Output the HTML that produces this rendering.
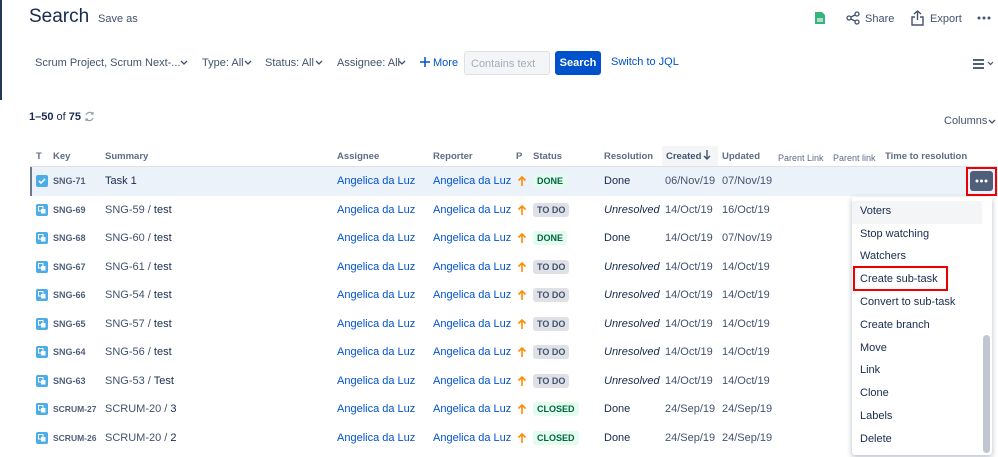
<!DOCTYPE html>
<html><head><meta charset="utf-8">
<style>
*{margin:0;padding:0;box-sizing:border-box}
body{width:998px;height:457px;overflow:hidden;background:#fff;font-family:"Liberation Sans",sans-serif;color:#172b4d;position:relative}
.a{position:absolute;white-space:nowrap}
.h{font-size:9.5px;color:#5e6c84;font-weight:bold;top:151px}
.row{position:absolute;left:30px;width:968px;height:29px}
.c{position:absolute;top:8px;font-size:11px;white-space:nowrap}
.key{font-size:9px;font-weight:bold;color:#505f79;top:9px}
.lk{color:#0052cc}
.gr{color:#42526e}
.ic{position:absolute;top:8px;left:6px}
.ar{position:absolute;top:8px;left:487px}
.st{font-size:9px;font-weight:bold;padding:2px 4px;border-radius:3px;top:7px}
.todo{background:#dfe1e6;color:#42526e}
.done{background:#e3fcef;color:#006644}
.menu{position:absolute;left:852px;top:197px;width:140px;height:258px;background:#fff;box-shadow:0 2px 6px rgba(9,30,66,.3);border-radius:3px}
.mi{position:absolute;left:8px;font-size:11px;color:#172b4d}
.f{font-size:11px;color:#42526e;top:57px}
</style></head><body>
<svg width="0" height="0" style="position:absolute"><defs>
<symbol id="sub" viewBox="0 0 12 12"><rect width="12" height="12" rx="2" fill="#4bade8"/><rect x="2.5" y="2.5" width="4.5" height="4.5" fill="none" stroke="#fff" stroke-width="1"/><rect x="5" y="5" width="4.5" height="4.5" fill="#fff"/></symbol>
<symbol id="arr" viewBox="0 0 10 12"><path d="M5 11V2M1.5 5.5L5 2l3.5 3.5" fill="none" stroke="#ff8b00" stroke-width="1.6"/></symbol>
</defs></svg>
<div class="a" style="left:0;top:0;width:2px;height:100px;background:#253858"></div>
<div class="a" style="left:29px;top:6px;font-size:19px;color:#172b4d">Search</div>
<div class="a" style="left:98px;top:13px;font-size:11px;color:#42526e">Save as</div>
<svg class="a" style="left:815px;top:12px" width="10" height="12" viewBox="0 0 10 12"><path d="M0 0h7l3 3v9H0z" fill="#36b37e"/><rect x="2" y="6" width="6" height="4" fill="#fff" opacity=".6"/></svg>
<svg class="a" style="left:846px;top:11px" width="14" height="14" viewBox="0 0 14 14" fill="none" stroke="#42526e" stroke-width="1.3"><circle cx="3" cy="7" r="2"/><circle cx="11" cy="3" r="2"/><circle cx="11" cy="11" r="2"/><path d="M5 6l4-2M5 8l4 2"/></svg>
<div class="a" style="left:865px;top:13px;font-size:11px;color:#42526e">Share</div>
<svg class="a" style="left:911px;top:10px" width="13" height="16" viewBox="0 0 13 16" fill="none" stroke="#42526e" stroke-width="1.4"><path d="M6.5 1v9M3 4l3.5-3L10 4M4 7H1v8h11V7H9"/></svg>
<div class="a" style="left:930px;top:13px;font-size:11px;color:#42526e">Export</div>
<svg class="a" style="left:977px;top:16px" width="14" height="4"><circle cx="2" cy="2" r="1.5" fill="#42526e"/><circle cx="7" cy="2" r="1.5" fill="#42526e"/><circle cx="12" cy="2" r="1.5" fill="#42526e"/></svg>

<svg width="0" height="0" style="position:absolute"><defs><symbol id="chev" viewBox="0 0 8 5"><path d="M1 1l3 3 3-3" fill="none" stroke="#42526e" stroke-width="1.3"/></symbol></defs></svg>
<div class="a f" style="left:35px">Scrum Project, Scrum Next-...</div><svg class="a" style="left:180px;top:60px" width="8" height="5"><use href="#chev"/></svg>
<div class="a f" style="left:202px">Type: All</div><svg class="a" style="left:244px;top:60px" width="8" height="5"><use href="#chev"/></svg>
<div class="a f" style="left:265px">Status: All</div><svg class="a" style="left:315px;top:60px" width="8" height="5"><use href="#chev"/></svg>
<div class="a f" style="left:337px">Assignee: All</div><svg class="a" style="left:398px;top:60px" width="8" height="5"><use href="#chev"/></svg>
<svg class="a" style="left:420px;top:57px" width="10" height="10"><path d="M5 0v10M0 5h10" stroke="#0052cc" stroke-width="1.5"/></svg>
<div class="a f" style="left:433px;color:#0052cc">More</div>
<div class="a" style="left:464px;top:51px;width:86px;height:24px;background:#f4f5f7;border:1px solid #dfe1e6;border-radius:3px;font-size:11px;color:#a5adba;padding:6px 6px">Contains text</div>
<div class="a" style="left:555px;top:51px;width:46px;height:24px;background:#0052cc;border-radius:3px;color:#fff;font-weight:bold;font-size:11px;padding:6px 0;text-align:center">Search</div>
<div class="a" style="left:611px;top:56px;font-size:11px;color:#0052cc">Switch to JQL</div>
<svg class="a" style="left:973px;top:59px" width="22" height="10" viewBox="0 0 22 10"><path d="M0 1h11M0 5h11M0 9h11" stroke="#172b4d" stroke-width="1.6"/><path d="M15 3l2.5 2.5L20 3" stroke="#42526e" fill="none" stroke-width="1.2"/></svg>

<div class="a" style="left:29px;top:111px;font-size:11px;font-weight:bold;color:#172b4d">1–50 <span style="font-weight:normal">of</span> 75</div>
<svg class="a" style="left:84px;top:111px" width="11" height="11" viewBox="0 0 11 11" fill="none" stroke="#97a0af" stroke-width="1.2"><path d="M2 4a4 4 0 0 1 7-1M9 7a4 4 0 0 1-7 1M9 1v2H7M2 10V8h2"/></svg>
<div class="a" style="left:944px;top:115px;font-size:11px;color:#42526e">Columns</div><svg class="a" style="left:988px;top:119px" width="8" height="5"><use href="#chev"/></svg>

<div class="a h" style="left:36px">T</div>
<div class="a h" style="left:53px">Key</div>
<div class="a h" style="left:105px">Summary</div>
<div class="a h" style="left:337px">Assignee</div>
<div class="a h" style="left:433px">Reporter</div>
<div class="a h" style="left:516px">P</div>
<div class="a h" style="left:533px">Status</div>
<div class="a h" style="left:604px">Resolution</div>
<div class="a" style="left:662px;top:146px;width:56px;height:20px;background:#f4f5f7"></div>
<div class="a h" style="left:666px;color:#42526e">Created</div>
<svg class="a" style="left:703px;top:150px" width="8" height="10" viewBox="0 0 8 10"><path d="M4 0v9M1 6l3 3 3-3" fill="none" stroke="#42526e" stroke-width="1.4"/></svg>
<div class="a h" style="left:722px">Updated</div>
<div class="a h" style="left:778px;top:153px;font-weight:normal;font-size:9px">Parent Link</div>
<div class="a h" style="left:833px;top:153px;font-weight:normal;font-size:9px">Parent link</div>
<div class="a h" style="left:885px">Time to resolution</div>
<div class="a" style="left:30px;top:166px;width:968px;height:1px;background:#dfe1e6"></div>

<div class="row" style="top:167px;background:#ebf2fa;box-shadow:inset 2px 0 0 #6b778c">
<svg class="ic" width="12" height="12" viewBox="0 0 12 12"><rect width="12" height="12" rx="2" fill="#4bade8"/><path d="M3 6l2 2 4-4" fill="none" stroke="#fff" stroke-width="1.6"/></svg>
<div class="c key" style="left:23px">SNG-71</div><div class="c" style="left:75px">Task 1</div>
<div class="c lk" style="left:307px">Angelica da Luz</div><div class="c lk" style="left:403px">Angelica da Luz</div>
<svg class="ar" width="10" height="12"><use href="#arr"/></svg><div class="c st done" style="left:503px">DONE</div>
<div class="c" style="left:574px">Done</div><div class="c gr" style="left:635px">06/Nov/19</div><div class="c gr" style="left:692px">07/Nov/19</div>
</div>

<div class="row" style="top:196px"><svg class="ic" width="12" height="12"><use href="#sub"/></svg><div class="c key" style="left:23px">SNG-69</div><div class="c" style="left:75px"><span class="gr">SNG-59 /</span> test</div><div class="c lk" style="left:307px">Angelica da Luz</div><div class="c lk" style="left:403px">Angelica da Luz</div><svg class="ar" width="10" height="12"><use href="#arr"/></svg><div class="c st todo" style="left:503px">TO DO</div><div class="c" style="left:574px;font-style:italic">Unresolved</div><div class="c gr" style="left:635px">14/Oct/19</div><div class="c gr" style="left:692px">16/Oct/19</div></div>
<div class="row" style="top:224px"><svg class="ic" width="12" height="12"><use href="#sub"/></svg><div class="c key" style="left:23px">SNG-68</div><div class="c" style="left:75px"><span class="gr">SNG-60 /</span> test</div><div class="c lk" style="left:307px">Angelica da Luz</div><div class="c lk" style="left:403px">Angelica da Luz</div><svg class="ar" width="10" height="12"><use href="#arr"/></svg><div class="c st done" style="left:503px">DONE</div><div class="c" style="left:574px">Done</div><div class="c gr" style="left:635px">14/Oct/19</div><div class="c gr" style="left:692px">07/Nov/19</div></div>
<div class="row" style="top:253px"><svg class="ic" width="12" height="12"><use href="#sub"/></svg><div class="c key" style="left:23px">SNG-67</div><div class="c" style="left:75px"><span class="gr">SNG-61 /</span> test</div><div class="c lk" style="left:307px">Angelica da Luz</div><div class="c lk" style="left:403px">Angelica da Luz</div><svg class="ar" width="10" height="12"><use href="#arr"/></svg><div class="c st todo" style="left:503px">TO DO</div><div class="c" style="left:574px;font-style:italic">Unresolved</div><div class="c gr" style="left:635px">14/Oct/19</div><div class="c gr" style="left:692px">14/Oct/19</div></div>
<div class="row" style="top:281px"><svg class="ic" width="12" height="12"><use href="#sub"/></svg><div class="c key" style="left:23px">SNG-66</div><div class="c" style="left:75px"><span class="gr">SNG-54 /</span> test</div><div class="c lk" style="left:307px">Angelica da Luz</div><div class="c lk" style="left:403px">Angelica da Luz</div><svg class="ar" width="10" height="12"><use href="#arr"/></svg><div class="c st todo" style="left:503px">TO DO</div><div class="c" style="left:574px;font-style:italic">Unresolved</div><div class="c gr" style="left:635px">14/Oct/19</div><div class="c gr" style="left:692px">14/Oct/19</div></div>
<div class="row" style="top:310px"><svg class="ic" width="12" height="12"><use href="#sub"/></svg><div class="c key" style="left:23px">SNG-65</div><div class="c" style="left:75px"><span class="gr">SNG-57 /</span> test</div><div class="c lk" style="left:307px">Angelica da Luz</div><div class="c lk" style="left:403px">Angelica da Luz</div><svg class="ar" width="10" height="12"><use href="#arr"/></svg><div class="c st todo" style="left:503px">TO DO</div><div class="c" style="left:574px;font-style:italic">Unresolved</div><div class="c gr" style="left:635px">14/Oct/19</div><div class="c gr" style="left:692px">14/Oct/19</div></div>
<div class="row" style="top:338px"><svg class="ic" width="12" height="12"><use href="#sub"/></svg><div class="c key" style="left:23px">SNG-64</div><div class="c" style="left:75px"><span class="gr">SNG-56 /</span> test</div><div class="c lk" style="left:307px">Angelica da Luz</div><div class="c lk" style="left:403px">Angelica da Luz</div><svg class="ar" width="10" height="12"><use href="#arr"/></svg><div class="c st todo" style="left:503px">TO DO</div><div class="c" style="left:574px;font-style:italic">Unresolved</div><div class="c gr" style="left:635px">14/Oct/19</div><div class="c gr" style="left:692px">14/Oct/19</div></div>
<div class="row" style="top:367px"><svg class="ic" width="12" height="12"><use href="#sub"/></svg><div class="c key" style="left:23px">SNG-63</div><div class="c" style="left:75px"><span class="gr">SNG-53 /</span> Test</div><div class="c lk" style="left:307px">Angelica da Luz</div><div class="c lk" style="left:403px">Angelica da Luz</div><svg class="ar" width="10" height="12"><use href="#arr"/></svg><div class="c st todo" style="left:503px">TO DO</div><div class="c" style="left:574px;font-style:italic">Unresolved</div><div class="c gr" style="left:635px">14/Oct/19</div><div class="c gr" style="left:692px">14/Oct/19</div></div>
<div class="row" style="top:395px"><svg class="ic" width="12" height="12"><use href="#sub"/></svg><div class="c key" style="left:23px;font-size:8.5px">SCRUM-27</div><div class="c" style="left:75px"><span class="gr">SCRUM-20 /</span> 3</div><div class="c lk" style="left:307px">Angelica da Luz</div><div class="c lk" style="left:403px">Angelica da Luz</div><svg class="ar" width="10" height="12"><use href="#arr"/></svg><div class="c st done" style="left:503px">CLOSED</div><div class="c" style="left:574px">Done</div><div class="c gr" style="left:635px">24/Sep/19</div><div class="c gr" style="left:692px">24/Sep/19</div></div>
<div class="row" style="top:424px"><svg class="ic" width="12" height="12"><use href="#sub"/></svg><div class="c key" style="left:23px;font-size:8.5px">SCRUM-26</div><div class="c" style="left:75px"><span class="gr">SCRUM-20 /</span> 2</div><div class="c lk" style="left:307px">Angelica da Luz</div><div class="c lk" style="left:403px">Angelica da Luz</div><svg class="ar" width="10" height="12"><use href="#arr"/></svg><div class="c st done" style="left:503px">CLOSED</div><div class="c" style="left:574px">Done</div><div class="c gr" style="left:635px">24/Sep/19</div><div class="c gr" style="left:692px">24/Sep/19</div></div>

<div class="a" style="left:966px;top:167px;width:31px;height:29px;border:2px solid #e00"></div>
<div class="a" style="left:970px;top:171px;width:23px;height:20px;background:#505f79;border-radius:3px"></div>
<svg class="a" style="left:975px;top:179px" width="13" height="4"><circle cx="2" cy="2" r="1.5" fill="#fff"/><circle cx="6.5" cy="2" r="1.5" fill="#fff"/><circle cx="11" cy="2" r="1.5" fill="#fff"/></svg>

<div class="menu">
<div class="a" style="left:0;top:4px;width:130px;height:23px;background:#f4f5f7"></div>
<div class="mi" style="top:8px">Voters</div>
<div class="mi" style="top:31px">Stop watching</div>
<div class="mi" style="top:53px">Watchers</div>
<div class="mi" style="top:76px">Create sub-task</div>
<div class="mi" style="top:99px">Convert to sub-task</div>
<div class="mi" style="top:122px">Create branch</div>
<div class="mi" style="top:145px">Move</div>
<div class="mi" style="top:167px">Link</div>
<div class="mi" style="top:190px">Clone</div>
<div class="mi" style="top:213px">Labels</div>
<div class="mi" style="top:236px">Delete</div>
<div class="a" style="left:131px;top:138px;width:7px;height:118px;background:#c1c7d0;border-radius:4px"></div>
</div>
<div class="a" style="left:853px;top:266px;width:95px;height:25px;border:2px solid #e00"></div>
</body></html>
